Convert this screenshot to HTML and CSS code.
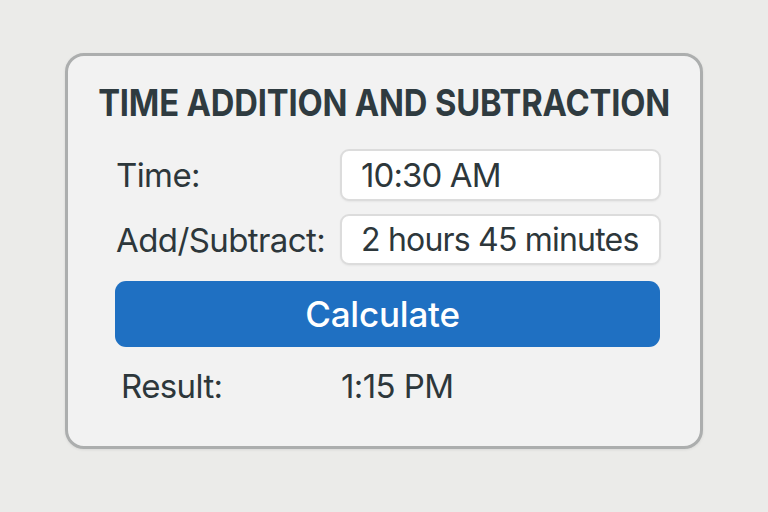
FILE: index.html
```html
<!DOCTYPE html>
<html>
<head>
<meta charset="utf-8">
<link rel="stylesheet" href="styles.css">
</head>
<body>
<div class="card">
  <div class="title-wrap"><h1 class="title">TIME ADDITION AND SUBTRACTION</h1></div>
  <div class="row">
    <span class="label">Time:</span>
    <div class="field">10:30 AM</div>
  </div>
  <div class="row row2">
    <span class="label">Add/Subtract:</span>
    <div class="field field-sm">2 hours 45 minutes</div>
  </div>
  <button class="btn">Calculate</button>
  <div class="result">
    <span class="rlabel">Result:</span>
    <span class="rvalue">1:15 PM</span>
  </div>
</div>
</body>
</html>
```
FILE: styles.css
```css
html, body {
  margin: 0;
  padding: 0;
  background: #ebebe9;
  width: 768px;
  height: 512px;
  overflow: hidden;
}
body {
  font-family: Inter, "Noto Sans", sans-serif;
  color: #2d373b;
  padding-top: 53px;
  padding-left: 65px;
  box-sizing: border-box;
}
.card {
  width: 638px;
  height: 396px;
  box-sizing: border-box;
  border: 3px solid #acaeae;
  border-radius: 19px;
  background: #f2f2f2;
  padding: 25px 39px 0 48px;
  display: flex;
  flex-direction: column;
  box-shadow: 0 1px 3px rgba(0, 0, 0, 0.08);
}
.title-wrap {
  margin: 0 -39px 0 -48px;
  display: flex;
  justify-content: center;
  height: 44px;
}
.title {
  margin: 0;
  font-size: 37px;
  font-weight: 700;
  white-space: nowrap;
  letter-spacing: -0.2px;
  color: #2f3b40;
  line-height: 44px;
  transform: scaleX(0.885);
}
.row {
  display: flex;
  align-items: center;
  margin-top: 24px;
  height: 52px;
}
.row2 { margin-top: 13px; height: 51px; }
.label {
  width: 224px;
  font-size: 33px;
  font-weight: 400;
  letter-spacing: -0.6px;
}
.field {
  flex: 1;
  height: 100%;
  box-sizing: border-box;
  border: 2px solid #dcdcdc;
  border-radius: 9px;
  background: #ffffff;
  display: flex;
  align-items: center;
  padding-left: 19px;
  font-size: 33px;
  letter-spacing: -0.9px;
  box-shadow: 0 1px 2px rgba(0, 0, 0, 0.05);
}
.field-sm {
  font-size: 32px;
  letter-spacing: -0.8px;
}
.btn {
  margin-top: 16px;
  height: 66px;
  border: none;
  border-radius: 11px;
  background: #1f70c2;
  color: #ffffff;
  font-family: Inter, "Noto Sans", sans-serif;
  font-size: 35px;
  font-weight: 500;
  letter-spacing: -0.2px;
  width: 545px;
  margin-left: -1px;
  padding: 0 10px 0 0;
}
.result {
  display: flex;
  align-items: center;
  margin-top: 19px;
  height: 40px;
  padding-left: 5px;
  font-size: 33px;
  letter-spacing: -0.6px;
}
.rlabel { width: 220px; }
```
